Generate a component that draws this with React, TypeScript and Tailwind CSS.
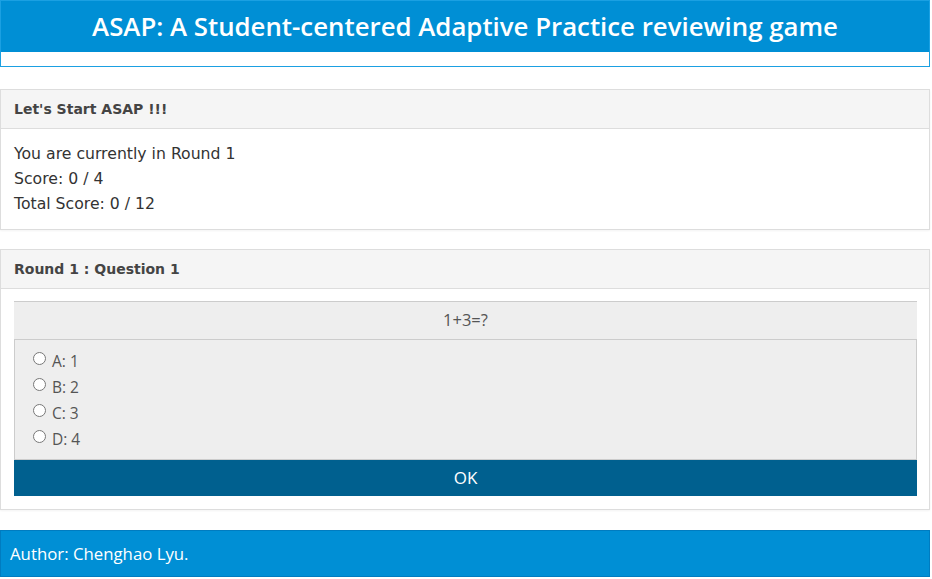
export default function App() {
  const options = ["A: 1", "B: 2", "C: 3", "D: 4"]

  return (
    <div className="min-h-[579px] bg-white pr-[2px] font-['DejaVu_Sans',sans-serif] text-[#333]">
      <header className="border border-[#1ba0e2]">
        <div className="flex h-[51px] items-center justify-center bg-[#008fd5]">
          <h1 className="font-['Open_Sans',sans-serif] text-[25.8px] font-semibold leading-none text-white">
            ASAP: A Student-centered Adaptive Practice reviewing game
          </h1>
        </div>
        <div className="h-[14px] bg-white" />
      </header>

      <section className="mt-[22px] border border-[#ddd] shadow-[0_1px_2px_rgba(0,0,0,0.05)]">
        <div className="h-[39px] border-b border-[#ddd] bg-[#f5f5f5] px-[13px] pt-[10px] text-[14px] font-bold leading-[18px] text-[#444]">
          Let's Start ASAP !!!
        </div>
        <div className="px-[13px] pt-[12px] pb-[13px] text-[15.7px] leading-[25px]">
          <div>You are currently in Round 1</div>
          <div>Score: 0 / 4</div>
          <div>Total Score: 0 / 12</div>
        </div>
      </section>

      <section className="mt-[19px] border border-[#ddd] shadow-[0_1px_2px_rgba(0,0,0,0.05)]">
        <div className="h-[39px] border-b border-[#ddd] bg-[#f5f5f5] px-[13px] pt-[10px] text-[14px] font-bold leading-[18px] text-[#444]">
          Round 1 : Question 1
        </div>
        <div className="pl-[13px] pr-[12px] pt-[12px] pb-[13px] font-['Open_Sans',sans-serif]">
          <div className="flex h-[38px] items-center justify-center border-t border-[#ccc] bg-[#eee] text-[16.5px] text-[#555]">
            1+3=?
          </div>
          <div className="border border-[#ccc] bg-[#eee] px-[18px] pt-[7px] pb-[8px]">
            {options.map((opt) => (
              <label key={opt} className="flex h-[26px] items-center gap-[6px] text-[15.5px] text-[#555]">
                <input type="radio" name="answer" className="m-0 mb-[4px] h-[13px] w-[13px]" />
                <span className="pt-[4px]">{opt}</span>
              </label>
            ))}
          </div>
          <button className="flex h-[36px] w-full items-center justify-center bg-[#00608f] text-[17px] text-white">
            OK
          </button>
        </div>
      </section>

      <footer className="mt-[20px] flex h-[47px] items-center border border-[#007cc0] bg-[#008fd5] px-[9px] font-['Open_Sans',sans-serif] text-[16.8px] text-white">
        Author: Chenghao Lyu.
      </footer>
    </div>
  )
}
